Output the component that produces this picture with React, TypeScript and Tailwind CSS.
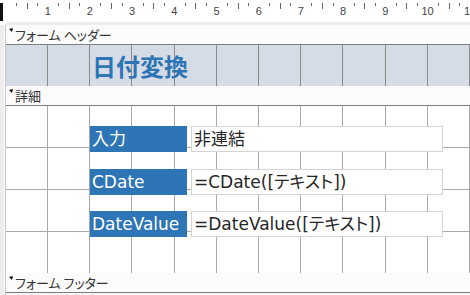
import React from "react";

const STEP = 42.2;
const gridXs = Array.from({ length: 11 }, (_, k) => Math.round(41 + STEP * k));
const rulerTicks = Array.from({ length: 45 }, (_, i) => i + 1).filter((i) => 5.5 + (i * STEP) / 4 < 470);

function Marker() {
  return (
    <svg width="5" height="5" viewBox="0 0 5 5" className="absolute left-[3px] top-[3px]">
      <polygon points="0,1 4,0 3,4" fill="#111" />
    </svg>
  );
}

function SectionBar({ label }: { label: string }) {
  return (
    <div className="relative h-[20px] bg-[#fbfbfb] border-b border-[#7f7f7f] flex items-center pl-[9px] text-[13px] text-[#333] font-['Noto_Sans_CJK_JP',sans-serif] [font-feature-settings:'palt'] leading-none">
      <Marker />
      <span>{label}</span>
    </div>
  );
}

function VLines({ color }: { color: string }) {
  return (
    <>
      {gridXs.map((x) => (
        <div key={x} className="absolute top-0 bottom-0 w-px" style={{ left: x, background: color }} />
      ))}
    </>
  );
}

function Row({ top, label, value }: { top: number; label: string; value: string }) {
  return (
    <div className="absolute left-[84px] flex gap-[4px] h-[26px]" style={{ top }}>
      <div className="w-[97px] h-[26px] bg-[#2e75b6] text-white text-[17px] leading-none flex items-center pl-[2px] font-['DejaVu_Sans','Noto_Sans_CJK_JP',sans-serif] [font-feature-settings:'palt'] whitespace-nowrap">
        {label}
      </div>
      <div className="w-[252px] h-[26px] bg-white border border-[#d4d4d4] text-[#262626] text-[17px] leading-none flex items-center pl-[2px] font-['DejaVu_Sans','Noto_Sans_CJK_JP',sans-serif] [font-feature-settings:'palt'] whitespace-nowrap">
        {value}
      </div>
    </div>
  );
}

export default function App() {
  return (
    <div className="w-[470px] h-[295px] bg-white overflow-hidden flex flex-col">
      {/* top ruler */}
      <div className="flex h-[25px]">
        <div className="w-[6px] h-full bg-white relative">
          <div className="absolute left-0 top-[3px] w-[3px] h-[18px] bg-[#111]" />
        </div>
        <div className="flex-1 flex flex-col">
          <div className="relative h-[22px] bg-white font-['Liberation_Sans',sans-serif] text-[11px] text-[#444]">
            {rulerTicks.map((i) => {
              const x = (i * STEP) / 4 - 0.5;
              if (i % 4 === 0) {
                return (
                  <span key={i} className="absolute top-[6px] leading-none -translate-x-1/2" style={{ left: x }}>
                    {i / 4}
                  </span>
                );
              }
              return (
                <div
                  key={i}
                  className={`absolute top-[3px] w-px bg-[#666] ${i % 4 === 2 ? "h-[6px]" : "h-[3px]"}`}
                  style={{ left: Math.round(x) }}
                />
              );
            })}
          </div>
          <div className="h-[3px] bg-[#ececec]" />
        </div>
      </div>

      {/* body */}
      <div className="flex flex-1">
        <div className="w-[6px] flex">
          <div className="w-[4px] bg-[#ededed]" />
          <div className="w-[1px] bg-white" />
          <div className="w-[1px] bg-[#c4c4c4]" />
        </div>
        <div className="flex-1 flex flex-col">
          <SectionBar label="フォーム ヘッダー" />
          <div className="relative h-[41px] bg-[#d6dce5]">
            <VLines color="#8a8a8a" />
            <div className="absolute left-[84px] top-0 bottom-0 flex items-center pl-[2px] text-[24px] font-bold text-[#2e75b6] leading-none font-['Noto_Sans_CJK_JP',sans-serif]">
              日付変換
            </div>
          </div>
          <SectionBar label="詳細" />
          <div className="relative h-[167px] bg-white">
            <VLines color="#a9a9a9" />
            {[41, 83, 125].map((y) => (
              <div key={y} className="absolute left-0 right-0 h-px bg-[#a9a9a9]" style={{ top: y }} />
            ))}
            <Row top={20} label="入力" value="非連結" />
            <Row top={63} label="CDate" value="=CDate([テキスト])" />
            <Row top={105} label="DateValue" value="=DateValue([テキスト])" />
          </div>
          <SectionBar label="フォーム フッター" />
          <div className="flex-1 bg-[#f4f4f4]" />
        </div>
      </div>
    </div>
  );
}
